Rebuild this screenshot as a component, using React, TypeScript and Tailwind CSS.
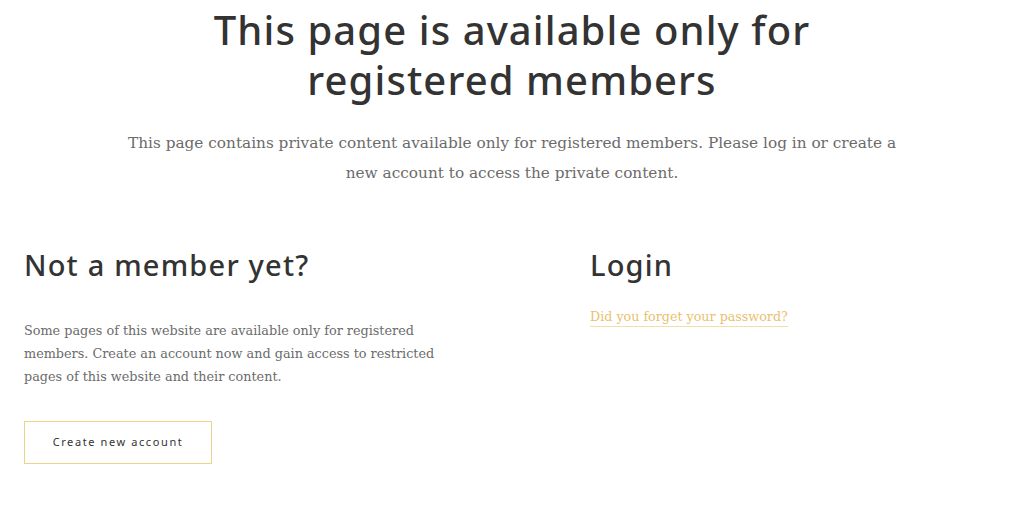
import React from 'react';

const App: React.FC = () => {
  return (
    <div className="min-h-[507px] w-full bg-white text-[#333]">
      <div className="px-6 pt-[5px]">
        <h1 className="text-center font-['Noto_Sans','Open_Sans',sans-serif] text-[40px] font-medium leading-[50px] tracking-[1.1px] text-[#333]">
          This page is available only for
          <br />
          registered members
        </h1>
        <p className="mx-auto mt-[23px] w-[780px] text-center font-['DejaVu_Serif','Liberation_Serif',serif] text-[15.3px] font-light leading-[30px] text-[#6b6b6b]">
          This page contains private content available only for registered members. Please log in or create a new account to access the private content.
        </p>

        <div className="mt-[57px] grid grid-cols-[536px_1fr] gap-[30px]">
          <div>
            <h2 className="font-['Noto_Sans','Open_Sans',sans-serif] text-[29px] font-medium leading-[40px] tracking-[1.2px] text-[#333]">
              Not a member yet?
            </h2>
            <p className="mt-[34px] w-[420px] font-['DejaVu_Serif','Liberation_Serif',serif] text-[12.8px] font-light leading-[23px] text-[#6b6b6b]">
              Some pages of this website are available only for registered members. Create an account now and gain access to restricted pages of this website and their content.
            </p>
            <button
              type="button"
              className="mt-[33px] h-[43px] w-[188px] border border-[#ecd38d] bg-white font-['Noto_Sans',sans-serif] text-[11px] tracking-[1.6px] text-[#333]"
            >
              Create new account
            </button>
          </div>
          <div>
            <h2 className="font-['Noto_Sans','Open_Sans',sans-serif] text-[29px] font-medium leading-[40px] tracking-[1.2px] text-[#333]">
              Login
            </h2>
            <a
              href="#"
              className="mt-[23px] inline-block border-b border-[#f3dcae] font-['DejaVu_Serif','Liberation_Serif',serif] text-[12.7px] font-light leading-[18px] text-[#e9bf6f]"
            >
              Did you forget your password?
            </a>
          </div>
        </div>
      </div>
    </div>
  );
};

export default App;
